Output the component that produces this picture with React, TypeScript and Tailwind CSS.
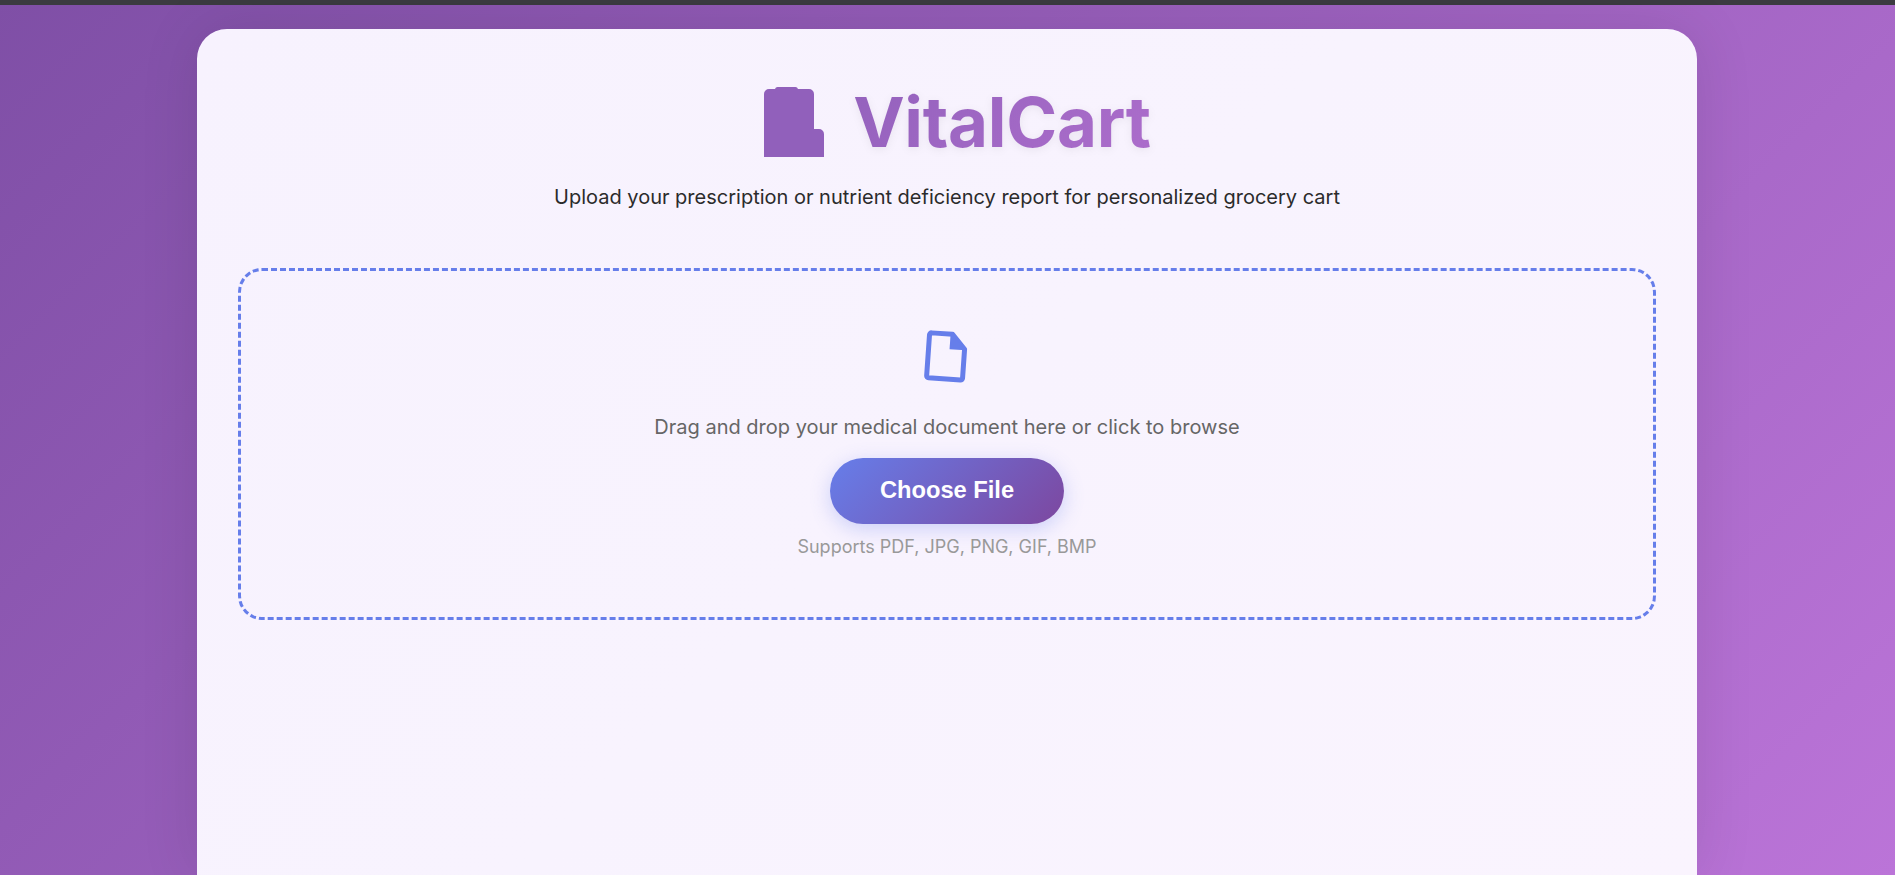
const FONT = 'font-[Inter,"Noto_Sans",sans-serif]';

const Logo = () => (
  <svg width="60" height="70" viewBox="0 0 60 70" className="shrink-0">
    <path
      d="M0 70V7a5 5 0 0 1 5-5h6a3 3 0 0 1 3-2h17a3 3 0 0 1 3 2h11a5 5 0 0 1 5 5v35h5a5 5 0 0 1 5 5v23z"
      fill="#9160bb"
    />
  </svg>
);

const FileIcon = () => (
  <svg width="46" height="54" viewBox="0 0 46 54" fill="none">
    <g transform="rotate(4 23 27)">
      <path
        d="M6 4h21l13 14v29a2 2 0 0 1-2 2H6a2 2 0 0 1-2-2V6a2 2 0 0 1 2-2z"
        stroke="#667eea"
        strokeWidth="5"
        strokeLinejoin="round"
      />
      <path d="M25 3l16 16H25z" fill="#667eea" />
    </g>
  </svg>
);

export default function App() {
  return (
    <div className={`flex h-[875px] flex-col overflow-hidden bg-[linear-gradient(135deg,#7f4fa6_0%,#bb74d8_100%)] ${FONT}`}>
      <div className="h-[5px] shrink-0 bg-[#3b3b40]" />
      <main className="flex flex-1 justify-center pt-6 pr-px">
        <div className="w-[1500px] rounded-t-[30px] bg-[linear-gradient(135deg,#f7f2fe,#f8f3fe_50%,#faf4fe)] px-[41px] pt-[58px] shadow-[0_0_60px_rgba(0,0,0,0.1)]">
          <header className="flex flex-col items-center">
            <div className="flex items-center gap-[29px] pl-[21px]">
              <Logo />
              <h1 className="bg-[linear-gradient(135deg,#9462bd,#ac6dcb)] bg-clip-text text-[69px] leading-[70px] font-bold tracking-[-0.3px] text-transparent drop-shadow-[0_2px_4px_rgba(0,0,0,0.06)]">
                VitalCart
              </h1>
            </div>
            <p className="mt-[27px] text-[20px] leading-[27px] text-[#2b2b2b]">
              Upload your prescription or nutrient deficiency report for personalized grocery cart
            </p>
          </header>
          <section className="mt-[57px] flex h-[352px] flex-col items-center rounded-[24px] border-[3px] border-dashed border-[#667eea] pt-[59px]">
            <FileIcon />
            <p className="mt-[30px] text-[20px] leading-[27px] text-[#666666]">
              Drag and drop your medical document here or click to browse
            </p>
            <button className="mt-[17px] h-[66px] w-[234px] rounded-full bg-[linear-gradient(135deg,#667eea,#7d479f)] font-['Liberation_Sans',Arial,sans-serif] text-[23.7px] font-bold text-white shadow-[0_5px_20px_rgba(102,126,234,0.3)]">
              Choose File
            </button>
            <p className="mt-[11px] text-[18px] leading-[24px] text-[#999999]">
              Supports PDF, JPG, PNG, GIF, BMP
            </p>
          </section>
        </div>
      </main>
    </div>
  );
}
